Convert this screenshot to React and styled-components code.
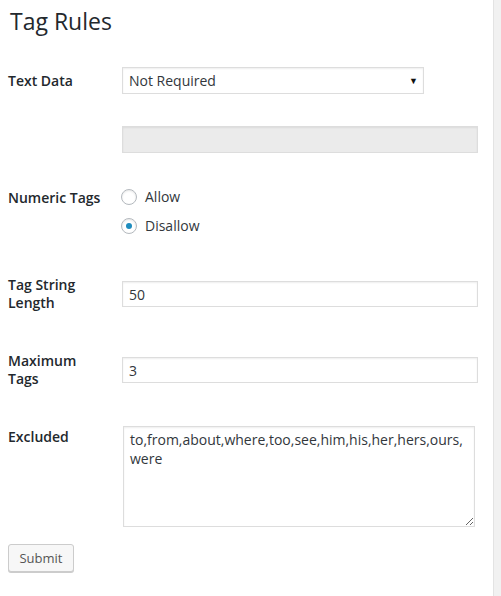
import React from "react";
import styled, { createGlobalStyle } from "styled-components";

const Global = createGlobalStyle`
  html, body { margin: 0; padding: 0; background: #f1f1f1; }
  body { font-family: "Open Sans", "Noto Sans", sans-serif; color: #23282d; }
`;

const Page = styled.div`
  width: 494px;
  min-height: 596px;
  background: #ffffff;
  border-right: 1px solid #e3e3e3;
  padding: 0 0 0 8px;
  box-sizing: border-box;
`;

const Title = styled.h1`
  margin: 0;
  padding: 6px 0 0 2px;
  height: 61px;
  box-sizing: border-box;
  font-size: 23px;
  font-weight: 400;
  line-height: 31px;
  color: #23282d;
`;

const Row = styled.div`
  display: flex;
  align-items: ${(p) => (p.$top ? "flex-start" : "center")};
  margin-top: ${(p) => p.$mt || 0}px;
`;

const Label = styled.div`
  width: 114px;
  flex: none;
  font-size: 14px;
  font-weight: 600;
  line-height: 18px;
  color: #23282d;
  padding-top: ${(p) => p.$pt || 0}px;
`;

const Select = styled.div`
  position: relative;
  width: 302px;
  height: 27px;
  box-sizing: border-box;
  border: 1px solid #dddddd;
  box-shadow: inset 0 1px 2px rgba(0, 0, 0, 0.07);
  font-size: 14px;
  line-height: 25px;
  padding-left: 6px;
  color: #32373c;
  background: #fff;
`;

const Arrow = styled.span`
  position: absolute;
  right: 5px;
  top: 0;
  font-size: 9px;
  line-height: 25px;
  color: #111;
`;

const TextInput = styled.input`
  width: ${(p) => p.$w || 356}px;
  height: ${(p) => p.$h || 26}px;
  box-sizing: border-box;
  border: 1px solid #dddddd;
  box-shadow: inset 0 1px 2px rgba(0, 0, 0, 0.07);
  background: ${(p) => (p.disabled ? "#ebebeb" : "#fff")};
  font-family: "Open Sans", "Noto Sans", sans-serif;
  font-size: 14px;
  color: #32373c;
  padding: 0 6px;
  margin: 0;
  outline: none;
`;

const Radios = styled.div`
  display: flex;
  flex-direction: column;
  gap: 9px;
`;

const RadioLine = styled.label`
  display: flex;
  align-items: center;
  gap: 8px;
  font-size: 14px;
  line-height: 20px;
  color: #32373c;
`;

const RadioCircle = styled.span`
  width: 16px;
  height: 16px;
  box-sizing: border-box;
  border-radius: 50%;
  border: 1px solid #b4b9be;
  box-shadow: inset 0 1px 2px rgba(0, 0, 0, 0.1);
  display: flex;
  align-items: center;
  justify-content: center;
  margin-left: -1px;
  &::after {
    content: "";
    width: 6px;
    height: 6px;
    border-radius: 50%;
    background: ${(p) => (p.$on ? "#1e8cbe" : "transparent")};
  }
`;

const TextArea = styled.textarea`
  width: 352px;
  height: 101px;
  box-sizing: border-box;
  margin: 0 0 0 1px;
  border: 1px solid #dddddd;
  box-shadow: inset 0 1px 2px rgba(0, 0, 0, 0.07);
  font-family: "Open Sans", "Noto Sans", sans-serif;
  font-size: 14px;
  line-height: 19px;
  color: #32373c;
  padding: 3px 6px;
  outline: none;
`;

const Button = styled.button`
  margin-top: 17px;
  height: 28px;
  width: 66px;
  box-sizing: border-box;
  padding: 0 10px 1px;
  font-family: "Open Sans", "Noto Sans", sans-serif;
  font-size: 13px;
  color: #555;
  background: #f7f7f7;
  border: 1px solid #cccccc;
  border-radius: 3px;
  box-shadow: 0 1px 0 #cccccc;
`;

export default function App() {
  return (
    <>
      <Global />
      <Page>
        <Title>Tag Rules</Title>
        <Row $mt={6}>
          <Label>Text Data</Label>
          <Select>
            Not Required
            <Arrow>▼</Arrow>
          </Select>
        </Row>
        <Row $mt={32}>
          <Label />
          <TextInput disabled $h={27} defaultValue="" />
        </Row>
        <Row $top $mt={34}>
          <Label $pt={2}>Numeric Tags</Label>
          <Radios>
            <RadioLine>
              <RadioCircle />
              Allow
            </RadioLine>
            <RadioLine>
              <RadioCircle $on />
              Disallow
            </RadioLine>
          </Radios>
        </Row>
        <Row $mt={40}>
          <Label>
            Tag String
            <br />
            Length
          </Label>
          <TextInput defaultValue="50" />
        </Row>
        <Row $mt={40}>
          <Label>
            Maximum
            <br />
            Tags
          </Label>
          <TextInput defaultValue="3" />
        </Row>
        <Row $top $mt={38}>
          <Label $pt={2}>Excluded</Label>
          <TextArea
            defaultValue={"to,from,about,where,too,see,him,his,her,hers,ours,\nwere"}
          />
        </Row>
        <Button>Submit</Button>
      </Page>
    </>
  );
}
